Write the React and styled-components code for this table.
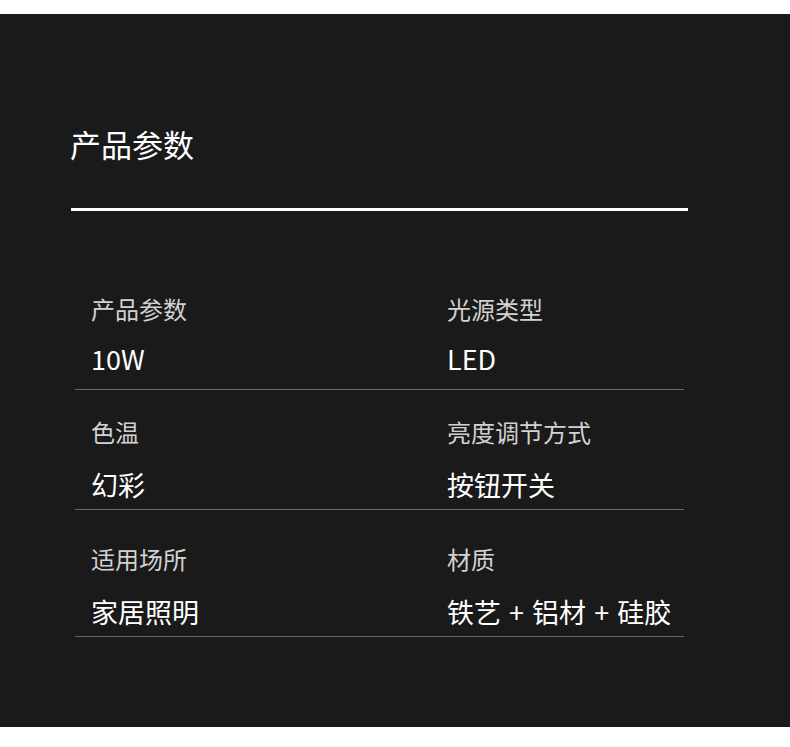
import styled, { createGlobalStyle } from "styled-components";

const GlobalStyle = createGlobalStyle`
  html, body {
    margin: 0;
    padding: 0;
    background: #ffffff;
  }
  body {
    font-family: "Noto Sans CJK SC", "Noto Sans", sans-serif;
  }
`;

const specs = [
  {
    pt: 86,
    gap: 24,
    pb: 16,
    items: [
      { label: "产品参数", value: "10W" },
      { label: "光源类型", value: "LED" },
    ],
  },
  {
    pt: 30,
    gap: 27,
    pb: 10,
    items: [
      { label: "色温", value: "幻彩" },
      { label: "亮度调节方式", value: "按钮开关" },
    ],
  },
  {
    pt: 37,
    gap: 27,
    pb: 10,
    items: [
      { label: "适用场所", value: "家居照明" },
      { label: "材质", value: "铁艺 + 铝材 + 硅胶" },
    ],
  },
];

const App = () => {
  return (
    <>
      <GlobalStyle />
      <Panel>
        <Title>产品参数</Title>
        <Divider />
        <SpecList>
          {specs.map((row, i) => (
            <SpecRow key={i} $pt={row.pt} $pb={row.pb}>
              {row.items.map((item) => (
                <SpecCell key={item.label}>
                  <SpecLabel>{item.label}</SpecLabel>
                  <SpecValue $gap={row.gap}>{item.value}</SpecValue>
                </SpecCell>
              ))}
            </SpecRow>
          ))}
        </SpecList>
      </Panel>
    </>
  );
};

export default App;

const Panel = styled.section`
  display: flex;
  flex-direction: column;
  align-items: flex-start;
  box-sizing: border-box;
  margin-top: 14px;
  width: 790px;
  height: 713px;
  padding: 114px 0 0 70px;
  background-color: #1a1a1a;
`;

const Title = styled.h2`
  margin: 0;
  font-size: 31px;
  line-height: 32px;
  font-weight: 400;
  color: #ffffff;
`;

const Divider = styled.div`
  margin: 48px 0 0 1px;
  width: 617px;
  height: 3px;
  background-color: #ffffff;
`;

const SpecList = styled.div`
  display: flex;
  flex-direction: column;
  margin-left: 5px;
  width: 609px;
`;

const SpecRow = styled.div`
  display: grid;
  grid-template-columns: 356px 1fr;
  padding: ${(p) => p.$pt}px 0 ${(p) => p.$pb}px 16px;
  border-bottom: 1px solid #696969;
`;

const SpecCell = styled.div`
  display: flex;
  flex-direction: column;
`;

const SpecLabel = styled.span`
  font-size: 24px;
  line-height: 24px;
  font-weight: 400;
  color: #d2d2d2;
  white-space: nowrap;
`;

const SpecValue = styled.span`
  margin-top: ${(p) => p.$gap}px;
  font-size: 27px;
  line-height: 28px;
  font-weight: 400;
  word-spacing: 2px;
  color: #ffffff;
  white-space: nowrap;
`;
